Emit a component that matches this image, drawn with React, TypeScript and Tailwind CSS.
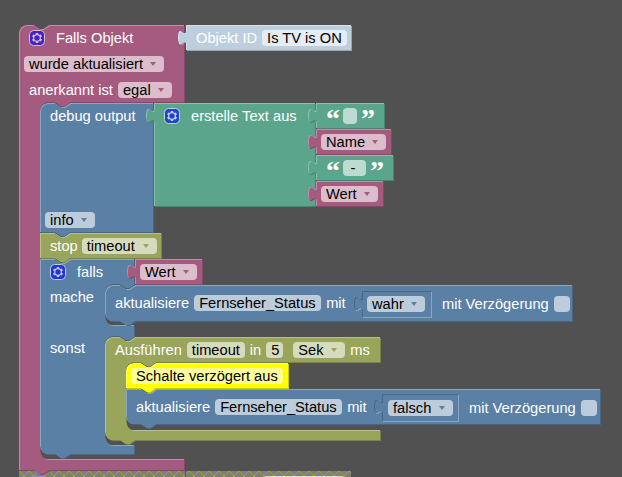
import React from "react";

const PINK = { f: "#a55b80", l: "#c08ca6", d: "#844966" };
const BLUE = { f: "#5b80a5", l: "#8ca6c0", d: "#496684" };
const GREEN = { f: "#5ba58c", l: "#8cc0ae", d: "#49846f" };
const OLIVE = { f: "#99a55b", l: "#b8c08c", d: "#7a8449" };
const YELLOW = { f: "#ffff00", l: "#ffff66", d: "#cccc00" };
const SHADOW = { f: "#bdcfdf", l: "#d8e3ec", d: "#97a6b2" };

type Tone = { f: string; l: string; d: string };

function Shape({ id, d, tone }: { id: string; d: string; tone: Tone }) {
  return (
    <g>
      <path d={d} fill={tone.d} fillRule="evenodd" transform="translate(1,1)" />
      <clipPath id={id}>
        <path d={d} clipRule="evenodd" />
      </clipPath>
      <g clipPath={`url(#${id})`}>
        <path d={d} fill={tone.l} fillRule="evenodd" />
        <path d={d} fill={tone.f} fillRule="evenodd" transform="translate(1,1)" />
      </g>
    </g>
  );
}

const tabUp = "c0,-10 -8,8 -8,-7.5 s8,2.5 8,-7.5";
const valueBlock = (x: number, y: number, r: number, b: number) =>
  `M${x},${y} H${r} V${b} H${x} V${y + 20} ${tabUp} Z`;
const hole = (x: number, y: number, r: number, b: number) =>
  `M${x},${y} H${r} V${b} H${x} V${y + 20} ${tabUp} Z`;

const SHAPES: { id: string; d: string; tone: Tone }[] = [
  {
    id: "pink",
    tone: PINK,
    d: "M19,33 A8,8 0 0,1 27,25 H34 l6,4 3,0 6,-4 H184 V102 H70 l-6,4 -3,0 -6,-4 H48 a8,8 0 0,0 -8,8 V451 a8,8 0 0,0 8,8 H184 V470 H49 l-6,4 -3,0 -6,-4 H19 Z",
  },
  { id: "objid", tone: SHADOW, d: valueBlock(186, 25, 351, 50) },
  {
    id: "debug",
    tone: BLUE,
    d: "M40,111 A8,8 0 0,1 48,103 H55 l6,4 3,0 6,-4 H153 V232 H70 l-6,4 -3,0 -6,-4 H40 Z",
  },
  { id: "join", tone: GREEN, d: valueBlock(154, 103, 315, 206) },
  { id: "q1", tone: GREEN, d: valueBlock(316, 103, 384, 128) },
  { id: "name", tone: PINK, d: valueBlock(316, 129, 391, 154) },
  { id: "q2", tone: GREEN, d: valueBlock(316, 155, 393, 180) },
  { id: "wert1", tone: PINK, d: valueBlock(316, 181, 383, 206) },
  {
    id: "stop",
    tone: OLIVE,
    d: "M40,233 H55 l6,4 3,0 6,-4 H161 V258 H70 l-6,4 -3,0 -6,-4 H40 Z",
  },
  {
    id: "falls",
    tone: BLUE,
    d: "M40,259 H55 l6,4 3,0 6,-4 H134 V284 H135 l-6,4 -3,0 -6,-4 H113 a8,8 0 0,0 -8,8 V317 a8,8 0 0,0 8,8 H134 V336 H135 l-6,4 -3,0 -6,-4 H113 a8,8 0 0,0 -8,8 V437 a8,8 0 0,0 8,8 H134 V454 H70 l-6,4 -3,0 -6,-4 H48 a8,8 0 0,1 -8,-8 Z",
  },
  { id: "wert2", tone: PINK, d: valueBlock(135, 259, 202, 284) },
  {
    id: "akt1",
    tone: BLUE,
    d: `M105,293 A8,8 0 0,1 113,285 H120 l6,4 3,0 6,-4 H572 V321 H135 l-6,4 -3,0 -6,-4 H113 a8,8 0 0,1 -8,-8 Z ${hole(362, 291, 431, 317)}`,
  },
  {
    id: "ausf",
    tone: OLIVE,
    d: "M105,345 A8,8 0 0,1 113,337 H120 l6,4 3,0 6,-4 H380 V362 H156 l-6,4 -3,0 -6,-4 H134 a8,8 0 0,0 -8,8 V422 a8,8 0 0,0 8,8 H380 V440 H135 l-6,4 -3,0 -6,-4 H113 a8,8 0 0,1 -8,-8 Z",
  },
  {
    id: "yellow",
    tone: YELLOW,
    d: "M126,371 A8,8 0 0,1 134,363 H141 l6,4 3,0 6,-4 H288 V388 H156 l-6,4 -3,0 -6,-4 H126 Z",
  },
  {
    id: "akt2",
    tone: BLUE,
    d: `M126,389 H141 l6,4 3,0 6,-4 H600 V424 H156 l-6,4 -3,0 -6,-4 H134 a8,8 0 0,1 -8,-8 Z ${hole(382, 394, 458, 421)}`,
  },
];

function Canvas() {
  return (
    <svg className="absolute inset-0" width={622} height={477}>
      <defs>
        <pattern id="dis" patternUnits="userSpaceOnUse" width="10" height="10" x="19" y="471">
          <rect width="10" height="10" fill="#7e7e7e" />
          <path d="M0 0L10 10M10 0L0 10" stroke="#a3a32a" strokeWidth="1" fill="none" />
        </pattern>
      </defs>
      <rect x="19" y="471" width="166" height="6" fill="url(#dis)" />
      <rect x="186" y="471" width="165" height="6" fill="url(#dis)" />
      <rect x="30" y="476" width="15" height="6" rx="3" fill="#8d8dd8" />
      <rect x="264" y="476" width="80" height="6" rx="3" fill="#dedede" />
      {/* sockets under the boolean inputs */}
      <path d={hole(362, 291, 431, 317)} fill={BLUE.f} />
      <path d={hole(382, 394, 458, 421)} fill={BLUE.f} />
      {SHAPES.map((s) => (
        <Shape key={s.id} {...s} />
      ))}
    </svg>
  );
}

function Gear() {
  return (
    <svg width="16" height="16" viewBox="0 0 16 16" className="shrink-0 overflow-visible opacity-60">
      <rect x="0.5" y="0.5" width="15" height="15" rx="4" ry="4" fill="#0000ff" stroke="#ffffff" strokeWidth="1" />
      <path
        fill="#ffffff"
        d="m 4.203,7.296 0,1.368 -0.92,0.677 -0.11,0.41 0.9,1.559 0.41,0.11 1.043,-0.457 1.187,0.683 0.127,1.134 0.3,0.3 1.8,0 0.3,-0.299 0.127,-1.138 1.185,-0.682 1.046,0.458 0.409,-0.11 0.9,-1.559 -0.11,-0.41 -0.92,-0.677 0,-1.366 0.92,-0.677 0.11,-0.41 -0.9,-1.559 -0.409,-0.109 -1.046,0.458 -1.185,-0.682 -0.127,-1.138 -0.3,-0.299 -1.8,0 -0.3,0.3 -0.126,1.135 -1.187,0.682 -1.043,-0.457 -0.41,0.11 -0.899,1.559 0.108,0.409z"
      />
      <circle cx="8" cy="8" r="2.7" fill="#0000ff" />
    </svg>
  );
}

function Row({ className, children }: { className: string; children: React.ReactNode }) {
  return <div className={`absolute flex h-4 items-center whitespace-nowrap ${className}`}>{children}</div>;
}

function Label({ className = "", children }: { className?: string; children: React.ReactNode }) {
  return <span className={`text-white ${className}`}>{children}</span>;
}

function Pill({
  className,
  arrow,
  children,
}: {
  className: string;
  arrow?: string;
  children?: React.ReactNode;
}) {
  return (
    <div className={`flex h-4 shrink-0 items-center justify-between rounded-[4px] bg-white/60 pl-[5px] pr-2 text-black ${className}`}>
      <span>{children}</span>
      {arrow && (
        <svg width="6" height="4" viewBox="0 0 6 4" className="shrink-0">
          <path d="M0 0H6L3 4Z" fill={arrow} />
        </svg>
      )}
    </div>
  );
}

function Quote({ className, children }: { className: string; children: React.ReactNode }) {
  return (
    <span className={`absolute font-['Liberation_Serif'] text-[28px] leading-none font-bold text-white ${className}`}>
      {children}
    </span>
  );
}

export default function App() {
  return (
    <div className="relative h-[477px] w-[622px] overflow-hidden bg-[#515151] font-['Liberation_Sans',sans-serif] text-[11pt] leading-4">
      <Canvas />

      <Row className="left-[29px] top-[30px]">
        <Gear />
        <Label className="ml-[11px]">Falls Objekt</Label>
      </Row>
      <Row className="left-[196px] top-[30px]">
        <Label>Objekt ID</Label>
        <Pill className="ml-[5px] w-[85px]">Is TV is ON</Pill>
      </Row>
      <Row className="left-[24px] top-[56px]">
        <Pill className="w-[140px]" arrow={PINK.f}>wurde aktualisiert</Pill>
      </Row>
      <Row className="left-[29px] top-[82px]">
        <Label>anerkannt ist</Label>
        <Pill className="ml-[5px] w-[54px]" arrow={PINK.f}>egal</Pill>
      </Row>

      <Row className="left-[50px] top-[108px]">
        <Label>debug output</Label>
      </Row>
      <Row className="left-[164px] top-[108px]">
        <Gear />
        <Label className="ml-[11px]">erstelle Text aus</Label>
      </Row>
      <Row className="left-[343px] top-[108px]">
        <Pill className="w-[14px]" />
      </Row>
      <Quote className="left-[326px] top-[105px]">“</Quote>
      <Quote className="left-[361px] top-[105px]">”</Quote>
      <Row className="left-[321px] top-[134px]">
        <Pill className="w-[65px]" arrow={PINK.f}>Name</Pill>
      </Row>
      <Row className="left-[343px] top-[160px]">
        <Pill className="w-[23px] justify-center pr-0 pl-0">-</Pill>
      </Row>
      <Quote className="left-[326px] top-[157px]">“</Quote>
      <Quote className="left-[370px] top-[157px]">”</Quote>
      <Row className="left-[321px] top-[186px]">
        <Pill className="w-[57px]" arrow={PINK.f}>Wert</Pill>
      </Row>

      <Row className="left-[45px] top-[212px]">
        <Pill className="w-[50px]" arrow={BLUE.f}>info</Pill>
      </Row>
      <Row className="left-[50px] top-[238px]">
        <Label>stop</Label>
        <Pill className="ml-[4px] w-[75px]" arrow={OLIVE.f}>timeout</Pill>
      </Row>

      <Row className="left-[50px] top-[264px]">
        <Gear />
        <Label className="ml-[11px]">falls</Label>
      </Row>
      <Row className="left-[140px] top-[264px]">
        <Pill className="w-[57px]" arrow={PINK.f}>Wert</Pill>
      </Row>
      <Row className="left-[50px] top-[289px]">
        <Label>mache</Label>
      </Row>
      <Row className="left-[115px] top-[295px]">
        <Label>aktualisiere</Label>
        <Pill className="ml-[5px] w-[127px]">Fernseher_Status</Pill>
        <Label className="ml-[5px]">mit</Label>
      </Row>
      <Row className="left-[367px] top-[296px]">
        <Pill className="w-[58px]" arrow={BLUE.f}>wahr</Pill>
        <Label className="ml-[17px]">mit Verzögerung</Label>
        <Pill className="ml-[5px] w-4 pr-0 pl-0" />
      </Row>

      <Row className="left-[50px] top-[340px]">
        <Label>sonst</Label>
      </Row>
      <Row className="left-[115px] top-[342px]">
        <Label>Ausführen</Label>
        <Pill className="ml-[5px] w-[58px]">timeout</Pill>
        <Label className="ml-[5px]">in</Label>
        <Pill className="ml-[5px] w-[17px]">5</Pill>
        <Pill className="ml-[10px] w-[52px]" arrow={OLIVE.f}>Sek</Pill>
        <Label className="ml-[5px]">ms</Label>
      </Row>

      <Row className="left-[131px] top-[368px]">
        <Pill className="w-[152px]">Schalte verzögert aus</Pill>
      </Row>
      <Row className="left-[136px] top-[399px]">
        <Label>aktualisiere</Label>
        <Pill className="ml-[5px] w-[127px]">Fernseher_Status</Pill>
        <Label className="ml-[5px]">mit</Label>
      </Row>
      <Row className="left-[388px] top-[400px]">
        <Pill className="w-[65px]" arrow={BLUE.f}>falsch</Pill>
        <Label className="ml-[16px]">mit Verzögerung</Label>
        <Pill className="ml-[5px] w-4 pr-0 pl-0" />
      </Row>
    </div>
  );
}
